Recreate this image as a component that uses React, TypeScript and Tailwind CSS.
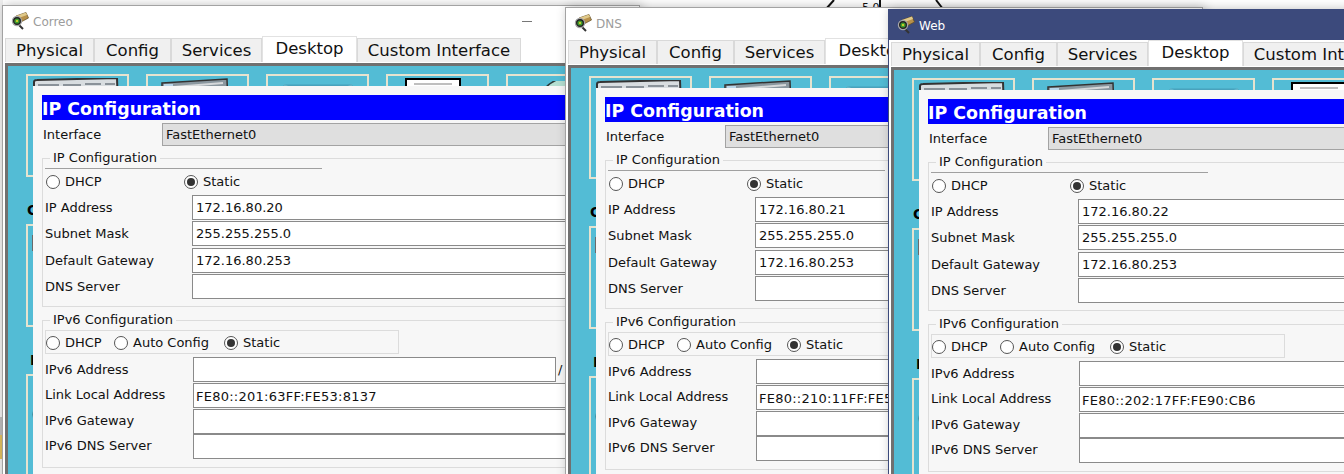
const font = "font-['DejaVu_Sans','Liberation_Sans',sans-serif]";

type WinProps = {
  title: string;
  ip: string;
  linkLocal: string;
  left: string;
  active?: boolean;
};

const tabs = [
  { name: "Physical", w: "w-[89px]" },
  { name: "Config", w: "w-[77px]" },
  { name: "Services", w: "w-[91px]" },
  { name: "Desktop", w: "w-[95px]" },
  { name: "Custom Interface", w: "w-[164px]" },
];

function PtIcon() {
  return (
    <svg width="18" height="18" viewBox="0 0 18 18" className="shrink-0">
      <path d="M5 4 L15 0.5 L17.5 6 L8 11 Z" fill="#b8914a" stroke="#5e4a22" strokeWidth="0.7" />
      <path d="M5 4 L15 0.5 L16 3 L6.5 6.5 Z" fill="#e0c98a" />
      <path d="M7 12 L12 17" stroke="#333" strokeWidth="2" />
      <circle cx="6" cy="9" r="4.6" fill="#222" stroke="#a8a8a8" strokeWidth="1.2" />
      <circle cx="6" cy="9" r="2.6" fill="#3f9a2e" />
      <circle cx="6" cy="9" r="1.1" fill="#e8d62c" />
    </svg>
  );
}

function Radio({ on }: { on?: boolean }) {
  return (
    <span className="flex h-[14px] w-[14px] shrink-0 items-center justify-center rounded-full border border-[#555] bg-white">
      {on && <span className="h-[8px] w-[8px] rounded-full bg-[#333]" />}
    </span>
  );
}

function Field({ label, value, mt, v6, short, up }: { label: string; value?: string; mt: string; v6?: boolean; short?: boolean; up?: boolean }) {
  return (
    <div className={`flex h-[25px] items-center ${mt}`}>
      <div className={`shrink-0 ${v6 ? "w-[148px]" : "w-[147px]"} ${up ? "pb-[2px]" : ""}`}>{label}</div>
      <div
        className={`flex h-[25px] items-center border border-[#8a8a8a] bg-white ${v6 ? "pl-[2px] pt-[2px] tracking-[0.25px]" : "pl-[3px]"} ${
          short ? "w-[363px]" : "flex-1"
        }`}
      >
        {value}
      </div>
      {short && <span className="ml-[2px]">/</span>}
    </div>
  );
}

// tile artwork, only the top of most of it peeks out above the config panel
function TileArt({ row, col }: { row: number; col: number }) {
  if (row === 0 && col === 0)
    return (
      <svg width="86" height="30" className="ml-[5px] mt-[2px]">
        <path d="M1 4 Q1 2 4 2 L84 0 L85 30 L1 30 Z" fill="#d8dde0" stroke="#333" strokeWidth="2" />
        <path d="M5 7 H26 M30 7 H48 M52 6 H68 M72 6 H82" stroke="#8a9299" strokeWidth="2" />
      </svg>
    );
  if (row === 0 && col === 1)
    return (
      <svg width="68" height="30" className="ml-[13px] mt-[2px]">
        <path d="M1 5 L66 1 L67 30 L1 30 Z" fill="#8a979f" stroke="#333" strokeWidth="1.5" />
        <path d="M3 6 L12 6 L12 30 L3 30 Z" fill="#b9d6ea" />
        <path d="M13 9 L62 5" stroke="#d5d8da" strokeWidth="2" />
      </svg>
    );
  if (row === 0 && col === 2)
    return (
      <svg width="76" height="30" className="ml-[12px] mt-[3px]">
        <path d="M4 6 H72 V30 H4 Z" fill="#4ca5bf" stroke="#46a0ba" />
        <path d="M4 6 L38 24 L72 6" fill="none" stroke="#62b4ca" strokeWidth="2" />
      </svg>
    );
  if (row === 0 && col === 3)
    return (
      <svg width="56" height="30" className="ml-[17px] mt-[2px]">
        <rect x="1" y="1" width="54" height="30" fill="white" stroke="black" strokeWidth="2" />
        <path d="M9 6 H47" stroke="#aaa" strokeWidth="1.5" />
      </svg>
    );
  if (row === 0 && col === 4)
    return (
      <svg width="70" height="30" className="ml-[27px] mt-[5px]">
        <path d="M1 30 A33 33 0 0 1 68 30 Z" fill="#b5dfd2" stroke="#2a3a3a" strokeWidth="1.5" />
      </svg>
    );
  if (row === 1 && col === 0)
    return <div className="ml-[4px] mt-[9px] h-[16px] w-[3px] bg-[#6a6a6a]" />;
  if (row === 2 && col === 0)
    return (
      <svg width="12" height="44" className="ml-[2px] mt-[18px]">
        <path d="M7 2 Q1 20 7 40" fill="none" stroke="#111" strokeWidth="2.5" />
      </svg>
    );
  return null;
}

function TileRow({ row, caption, indent }: { row: number; caption?: string; indent?: string }) {
  return (
    <div className="h-[150px]">
      <div className="flex gap-[17px]">
        {[0, 1, 2, 3, 4].map((col) => (
          <div key={col} className="h-[103px] w-[103px] shrink-0 overflow-hidden border-2 border-[#e6e3cf]">
            <TileArt row={row} col={col} />
          </div>
        ))}
      </div>
      {caption && <div className={`mt-[24px] text-[14px] font-bold leading-[18px] text-black ${indent}`}>{caption}</div>}
    </div>
  );
}

function Window({ title, ip, linkLocal, left, active }: WinProps) {
  return (
    <div
      className={`absolute h-[600px] w-[638px] border bg-white shadow-[2px_0_10px_rgba(0,0,0,0.25)] ${left} ${
        active ? "border-[#3c4a7c]" : "border-[#a3a3a3]"
      }`}
    >
      <div className={`flex h-[30px] items-center pl-[8px] ${active ? "bg-[#3c4a7c] text-white" : "text-[#9c9c9c]"}`}>
        <PtIcon />
        <span className="ml-[4px] pt-[2px] text-[12px]">{title}</span>
        {!active && <span className="ml-auto mr-[107px] h-px w-[10px] bg-[#777]" />}
      </div>

      <div className="flex h-[26px] items-end pl-[2px] text-[16.5px] text-[#111]">
        {tabs.map((t) =>
          t.name === "Desktop" ? (
            <div key={t.name} className={`flex h-[26px] items-center justify-center border-x border-t border-[#e2e2e2] bg-white ${t.w}`}>
              {t.name}
            </div>
          ) : (
            <div key={t.name} className={`flex h-[24px] items-center justify-center border border-b-0 border-[#d9d9d9] bg-[#f0f0f0] pt-[2px] ${t.w}`}>
              {t.name}
            </div>
          )
        )}
      </div>

      <div className="relative ml-[2px] mt-px h-[530px] border-l-[3px] border-t-[3px] border-[#707070] bg-[#53bcd5] pl-[18px] pt-[8px]">
        <TileRow row={0} caption="C" indent="pl-px" />
        <TileRow row={1} caption="I" indent="pl-[4px]" />
        <TileRow row={2} />

        {/* config panel sits on top of the desktop tiles */}
        <div className="absolute bottom-0 left-[25px] right-[30px] top-[20px] bg-[#f7f7f7] pl-[9px] pr-[8px] pt-[9px] text-[13px] text-[#111]">
          <div className="flex h-[25px] items-center bg-[#0000ff] pt-[4px] text-[17.4px] font-bold text-white">IP Configuration</div>

          <div className="mt-[3px] flex h-[23px] items-center">
            <div className="w-[120px] shrink-0 pl-px">Interface</div>
            <div className="flex h-[23px] flex-1 items-center border border-[#a3a3a3] bg-[#dfdfdf] pl-[3px]">FastEthernet0</div>
          </div>

          <fieldset className="mt-[4px] h-[157px] border border-[#dcdcdc] pl-[2px]">
            <legend className="ml-[5px] px-[3px] leading-[16px]">IP Configuration</legend>
            <div className="mt-[2px] h-px w-[277px] bg-[#a0a0a0]" />
            <div className="mt-[6px] flex h-[14px] items-center">
              <span className="ml-px"><Radio /></span>
              <span className="ml-[5px] w-[119px]">DHCP</span>
              <Radio on />
              <span className="ml-[5px]">Static</span>
            </div>
            <Field label="IP Address" value={ip} mt="mt-[6px]" />
            <Field label="Subnet Mask" value="255.255.255.0" mt="mt-px" />
            <Field label="Default Gateway" value="172.16.80.253" mt="mt-[2px]" />
            <Field label="DNS Server" mt="mt-px" />
          </fieldset>

          <fieldset className="mt-[5px] h-[156px] border border-[#dcdcdc] pl-[2px]">
            <legend className="ml-[5px] px-[3px] leading-[16px]">IPv6 Configuration</legend>
            <div className="mt-[2px] flex h-[24px] w-[354px] items-center border border-[#dcdcdc] pt-[2px]">
              <Radio />
              <span className="ml-[5px] w-[49px]">DHCP</span>
              <Radio />
              <span className="ml-[5px] w-[91px]">Auto Config</span>
              <Radio on />
              <span className="ml-[5px]">Static</span>
            </div>
            <Field label="IPv6 Address" mt="mt-[3px]" v6 short />
            <Field label="Link Local Address" value={linkLocal} mt="mt-px" v6 up />
            <Field label="IPv6 Gateway" mt="mt-px" v6 up />
            <Field label="IPv6 DNS Server" mt="mt-0" v6 up />
          </fieldset>
        </div>
      </div>
    </div>
  );
}

export default function App() {
  return (
    <div className={`relative h-[474px] w-[1344px] overflow-hidden bg-white ${font}`}>
      {/* bits of the workspace behind the windows */}
      <svg width="1344" height="12" className="absolute left-0 top-0">
        <path d="M834 0 L826 9 M880 0 V9 M936 0 L943 9" stroke="#111" strokeWidth="2" fill="none" />
      </svg>
      <span className="absolute left-[862px] top-[2px] text-[11px] leading-[12px] text-[#111]">5 0</span>
      <div className="absolute left-0 top-0 h-[474px] w-[3px] bg-[#efefef]" />
      <div className="absolute left-0 top-[417px] h-[18px] w-[3px] bg-[#bdbdbd]" />
      <div className="absolute left-0 top-[435px] h-[24px] w-[3px] bg-[#e0c060]" />

      <Window title="Correo" ip="172.16.80.20" linkLocal="FE80::201:63FF:FE53:8137" left="left-[2px] top-[5px]" />
      <Window title="DNS" ip="172.16.80.21" linkLocal="FE80::210:11FF:FE5B:A90C" left="left-[565px] top-[7px]" />
      <Window title="Web" ip="172.16.80.22" linkLocal="FE80::202:17FF:FE90:CB6" left="left-[888px] top-[9px]" active />
    </div>
  );
}
